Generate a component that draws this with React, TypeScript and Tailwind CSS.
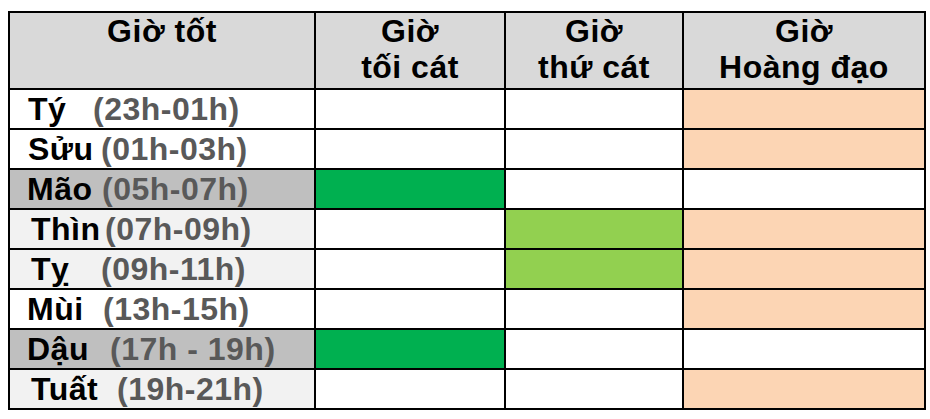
import React from 'react';

type Row = {
  name: string;
  time: string;
  bg: string;
  pad: string;
  nameW: string;
  c2: string;
  c3: string;
  c4: string;
};

const W = 'bg-white';
const DARK = 'bg-[#00b050]';
const LIGHT = 'bg-[#92d050]';
const PEACH = 'bg-[#fcd5b4]';

const rows: Row[] = [
  { name: 'Tý', time: '(23h-01h)', bg: 'bg-white', pad: 'pl-[18px]', nameW: 'w-[65px]', c2: W, c3: W, c4: PEACH },
  { name: 'Sửu', time: '(01h-03h)', bg: 'bg-white', pad: 'pl-[18px]', nameW: 'w-[73px]', c2: W, c3: W, c4: PEACH },
  { name: 'Mão', time: '(05h-07h)', bg: 'bg-[#bfbfbf]', pad: 'pl-[17px]', nameW: 'w-[75px]', c2: DARK, c3: W, c4: W },
  { name: 'Thìn', time: '(07h-09h)', bg: 'bg-[#f2f2f2]', pad: 'pl-[21px]', nameW: 'w-[74px]', c2: W, c3: LIGHT, c4: PEACH },
  { name: 'Tỵ', time: '(09h-11h)', bg: 'bg-[#f2f2f2]', pad: 'pl-[21px]', nameW: 'w-[70px]', c2: W, c3: LIGHT, c4: PEACH },
  { name: 'Mùi', time: '(13h-15h)', bg: 'bg-white', pad: 'pl-[17px]', nameW: 'w-[76px]', c2: W, c3: W, c4: PEACH },
  { name: 'Dậu', time: '(17h - 19h)', bg: 'bg-[#bfbfbf]', pad: 'pl-[17px]', nameW: 'w-[83px]', c2: DARK, c3: W, c4: W },
  { name: 'Tuất', time: '(19h-21h)', bg: 'bg-[#f2f2f2]', pad: 'pl-[21px]', nameW: 'w-[86px]', c2: W, c3: W, c4: PEACH },
];

const headers = [['Giờ tốt'], ['Giờ', 'tối cát'], ['Giờ', 'thứ cát'], ['Giờ', 'Hoàng đạo']];

export default function App() {
  return (
    <div className="min-h-screen bg-white pl-[8px] pt-[11px] font-['Liberation_Sans',Arial,sans-serif] font-bold text-[32px] tracking-[0.5px] text-black">
      <div className="grid w-[918px] grid-cols-[304px_188px_176px_240px] grid-rows-[75px_repeat(8,38px)] gap-[2px] border-2 border-black bg-black">
        {headers.map((h, i) => (
          <div key={i} className="bg-[#d9d9d9] text-center leading-[36px]">
            {h.map((line) => (
              <div key={line}>{line}</div>
            ))}
          </div>
        ))}
        {rows.map((r) => (
          <React.Fragment key={r.name}>
            <div className={`${r.bg} ${r.pad} flex items-center whitespace-nowrap leading-[38px]`}>
              <span className={`${r.nameW} inline-block`}>{r.name}</span>
              <span className="text-[#595959] whitespace-pre">{r.time}</span>
            </div>
            <div className={r.c2} />
            <div className={r.c3} />
            <div className={r.c4} />
          </React.Fragment>
        ))}
      </div>
    </div>
  );
}
